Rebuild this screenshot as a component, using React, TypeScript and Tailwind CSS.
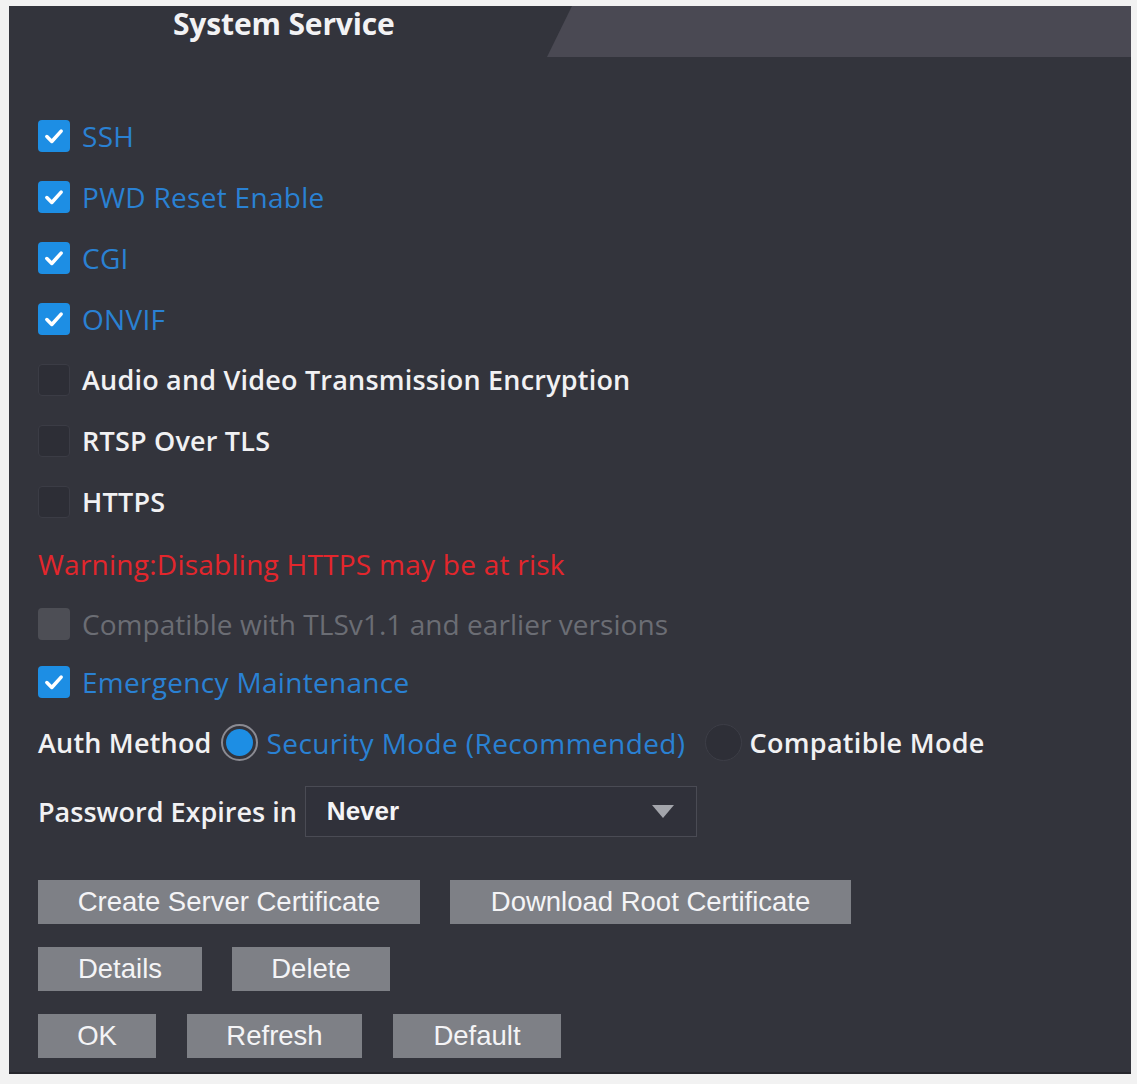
import React from 'react';

const labelFont = { fontFamily: '"Open Sans", "Noto Sans", sans-serif' };
const btnFont = { fontFamily: '"Liberation Sans", Arial, sans-serif' };

function Check({ on, disabled }: { on?: boolean; disabled?: boolean }) {
  if (disabled) {
    return <span className="w-[32px] h-[32px] rounded-[4px] bg-[#4d4e55] shrink-0" />;
  }
  if (!on) {
    return <span className="w-[32px] h-[32px] rounded-[4px] bg-[#2d2e36] border border-[#3b3c45] shrink-0" />;
  }
  return (
    <span className="w-[32px] h-[32px] rounded-[4px] bg-[#1d8ee4] shrink-0 flex items-center justify-center">
      <svg width="22" height="22" viewBox="0 0 20 20" fill="none">
        <path d="M3.5 10.5 L8 15 L16.5 5.5" stroke="white" strokeWidth="3.2" strokeLinecap="round" strokeLinejoin="round" />
      </svg>
    </span>
  );
}

function Row({ on, disabled, label, h = 'h-[61px]' }: { on?: boolean; disabled?: boolean; label: string; h?: string }) {
  const color = disabled
    ? 'text-[#6b6d74] text-[28px] tracking-[0.05px]'
    : on
      ? 'text-[#2a81d3] text-[28px] tracking-[0.3px]'
      : 'text-[#f1f1f3] text-[27px] font-semibold tracking-[0.2px]';
  return (
    <div className={`${h} flex items-center gap-[12px]`}>
      <Check on={on} disabled={disabled} />
      <span className={`leading-none ${color}`} style={labelFont}>{label}</span>
    </div>
  );
}

function Btn({ w, children }: { w: string; children: React.ReactNode }) {
  return (
    <div className={`${w} h-[44px] bg-[#7e8086] flex items-center justify-center text-[27.5px] text-[#f4f4f6]`} style={btnFont}>
      {children}
    </div>
  );
}

export default function App() {
  return (
    <div className="w-[1137px] h-[1084px] bg-[#f2f2f2] pl-[9px] pt-[6px]">
      <div className="w-[1122px] h-[1068px] bg-[#33343c] border-b-2 border-[#26262c] flex flex-col">
        {/* tab header */}
        <div className="h-[51px] flex">
          <div className="w-[539px] pl-[164px] flex items-start">
            <span className="text-[30px] leading-[36px] font-bold text-[#f2f2f4] tracking-[-0.15px]" style={labelFont}>System Service</span>
          </div>
          <div className="flex-1 -ml-[1px] bg-[#4a4953] [clip-path:polygon(25px_0,100%_0,100%_100%,0_100%)]" />
        </div>

        <div className="pl-[29px] pt-[48px] flex flex-col">
          <Row on label="SSH" />
          <Row on label="PWD Reset Enable" />
          <Row on label="CGI" />
          <Row on label="ONVIF" />
          <Row label="Audio and Video Transmission Encryption" />
          <Row label="RTSP Over TLS" />
          <Row label="HTTPS" />
          <div className="h-[64px] flex items-center">
            <span className="text-[28px] tracking-[0.25px] leading-none text-[#e3262c]" style={labelFont}>Warning:Disabling HTTPS may be at risk</span>
          </div>
          <Row disabled label="Compatible with TLSv1.1 and earlier versions" h="h-[55px]" />
          <Row on label="Emergency Maintenance" />

          {/* auth method */}
          <div className="h-[61px] flex items-center leading-none" style={labelFont}>
            <span className="text-[27px] text-[#f1f1f3] font-semibold tracking-[0.2px]">Auth Method</span>
            <span className="ml-[9px] w-[37px] h-[37px] rounded-full border-2 border-[#8a8a92] flex items-center justify-center shrink-0">
              <span className="w-[27px] h-[27px] rounded-full bg-[#1d8ee4]" />
            </span>
            <span className="ml-[9px] text-[28px] tracking-[0.4px] text-[#2a81d3]">Security Mode (Recommended)</span>
            <span className="ml-[19px] w-[37px] h-[37px] rounded-full border border-[#3d3e47] bg-[#2e2f37] shrink-0" />
            <span className="ml-[8px] text-[27px] tracking-[0.3px] text-[#f1f1f3] font-semibold">Compatible Mode</span>
          </div>

          {/* password expiry */}
          <div className="h-[77px] flex items-center">
            <span className="text-[27px] leading-none text-[#f1f1f3] font-semibold" style={labelFont}>Password Expires in</span>
            <div className="ml-[8px] w-[392px] h-[51px] border border-[#4a4b54] bg-[#30313a] flex items-center justify-between pl-[21px] pr-[22px]">
              <span className="text-[26px] text-[#f4f4f6] font-bold" style={btnFont}>Never</span>
              <svg width="22" height="13" viewBox="0 0 22 13">
                <path d="M0 0 H22 L11 13 Z" fill="#a3a5ab" />
              </svg>
            </div>
          </div>

          {/* buttons */}
          <div className="mt-[30px] flex flex-col gap-[23px]">
            <div className="flex gap-[30px]">
              <Btn w="w-[382px]">Create Server Certificate</Btn>
              <Btn w="w-[401px]">Download Root Certificate</Btn>
            </div>
            <div className="flex gap-[30px]">
              <Btn w="w-[164px]">Details</Btn>
              <Btn w="w-[158px]">Delete</Btn>
            </div>
            <div className="flex gap-[31px]">
              <Btn w="w-[118px]">OK</Btn>
              <Btn w="w-[175px]">Refresh</Btn>
              <Btn w="w-[168px]">Default</Btn>
            </div>
          </div>
        </div>
      </div>
    </div>
  );
}
